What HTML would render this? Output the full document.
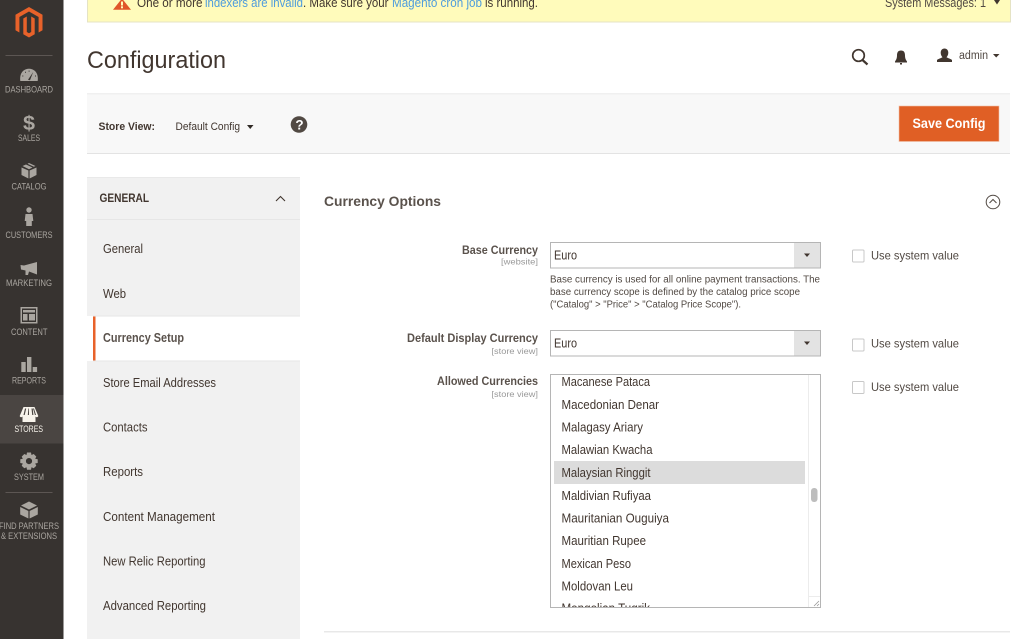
<!DOCTYPE html>
<html lang="en"><head><meta charset="utf-8"><title>Configuration</title>
<style>
html,body{margin:0;padding:0;background:#fff;width:1024px;height:639px;overflow:hidden}
svg{display:block;font-family:"Liberation Sans",sans-serif}
svg.page{filter:blur(.3px)}
.nav text{font-size:8.800px;fill:#aaa6a0}
.nav path,.nav rect.i,.nav circle.i{fill:#aaa6a0}
.m{font-size:12.500px;fill:#41362f}
.o{font-size:12.500px;fill:#41362f}
.l{font-size:12px;font-weight:bold;fill:#5a524c}
.s{font-size:8.500px;fill:#999}
.n{font-size:10px;fill:#514943}
.u{font-size:12px;fill:#514943}
.e{font-size:12.500px;fill:#41362f}
.b{fill:#fff;stroke:#b5b5b5;stroke-width:1}
.c{fill:#fff;stroke:#c8c8c8;stroke-width:1}
</style></head><body>
<svg class="page" width="1024" height="639" viewBox="0 0 1024 639" xmlns="http://www.w3.org/2000/svg">
<!-- sidebar -->
<rect x="0" y="0" width="63.500" height="639" fill="#373330"/>
<rect x="0" y="395" width="63.500" height="48.500" fill="#4a4542"/>
<path d="M29 7L42.500 14.800V30.200L38.600 32.500V17L29 11.500L19.400 17V32.500L15.500 30.200V14.800Z" fill="#e8622a"/>
<path d="M29 37.500L23.300 34.200V18.500L26.800 16.500V32L29 33.300L31.200 32V16.500L34.700 18.500V34.200Z" fill="#e8622a"/>
<rect x="5.500" y="55" width="47" height="1" fill="#5c5653"/>
<rect x="5.500" y="492" width="47" height="1" fill="#5c5653"/>
<g class="nav">
<path d="M20.300 81C19.300 73.500 23.300 68.800 29 68.800C34.700 68.800 38.700 73.500 37.700 81Z"/>
<path d="M28 79.800L33.200 72L30 80.300Z" style="fill:#373330"/>
<path d="M22.300 75.500h1v1h-1zM25 71.800h1v1h-1zM28.600 70.600h1v1h-1zM35 75.500h1v1h-1z" style="fill:#373330"/>
<text x="5" y="92.500" textLength="48" lengthAdjust="spacingAndGlyphs">DASHBOARD</text>
<text x="23" y="130" style="font-size:20px;font-weight:bold;fill:#aaa6a0" textLength="12" lengthAdjust="spacingAndGlyphs">$</text>
<text x="18" y="141" textLength="22" lengthAdjust="spacingAndGlyphs">SALES</text>
<path d="M21.500 167.500L28.400 170.500V178.500L21.500 175Z"/>
<path d="M29.600 170.500L36.500 167.500V175L29.600 178.500Z"/>
<path d="M22.500 166L26 164.500L32.500 167.500L29 169.300Z"/>
<path d="M27.500 163.800L29 163L35.500 166L33.800 166.800Z"/>
<text x="11.500" y="189.500" textLength="35" lengthAdjust="spacingAndGlyphs">CATALOG</text>
<circle class="i" cx="29" cy="210" r="2.700"/>
<path d="M25.500 214H32.500L33.300 221H31.800V226H26.200V221H24.700Z"/>
<text x="5.500" y="238" textLength="47" lengthAdjust="spacingAndGlyphs">CUSTOMERS</text>
<path d="M20.500 265L24 265.500L37 262V274.500L29 271.500L28 275H25.500L25.500 270.500L21 269.500Z"/>
<text x="6" y="286" textLength="46" lengthAdjust="spacingAndGlyphs">MARKETING</text>
<path fill-rule="evenodd" d="M20.500 307H37.500V323.500H20.500ZM22 308.500V322H36V308.500Z"/>
<rect class="i" x="23" y="310" width="12" height="2.500"/>
<rect class="i" x="23" y="314" width="4.500" height="6.500"/>
<rect class="i" x="29" y="314" width="6" height="6.500"/>
<text x="11" y="335" textLength="36.500" lengthAdjust="spacingAndGlyphs">CONTENT</text>
<rect class="i" x="21.300" y="362" width="4.400" height="10"/>
<rect class="i" x="27" y="357" width="4.400" height="15"/>
<rect class="i" x="32.700" y="367" width="4.400" height="5"/>
<text x="12" y="383.500" textLength="34" lengthAdjust="spacingAndGlyphs">REPORTS</text>
<path style="fill:#f7f3eb" d="M23.500 407H34.500L38.300 416C38 417.500 36 417.500 35.500 416.500V422H22.500V416.500C22 417.500 20 417.500 19.700 416Z"/>
<path style="fill:#4a4542" d="M25 408.500L23.500 415H24.700L26.200 408.500ZM28.400 408.500L27.800 415H29L29 408.500ZM31.500 408.500L32.200 415H33.400L32.700 408.500ZM34 408.500L36 415H34.900L33 408.500Z"/>
<text x="14.500" y="432" style="fill:#f7f3eb" textLength="28.500" lengthAdjust="spacingAndGlyphs">STORES</text>
<path fill-rule="evenodd" d="M27 452.500H31L31.500 455L33.700 454L36.300 456.600L35.200 458.800L37.700 459.300V463L35.200 463.500L36.300 465.700L33.700 468.300L31.500 467.200L31 469.700H27L26.500 467.200L24.300 468.300L21.700 465.700L22.800 463.500L20.300 463V459.300L22.800 458.800L21.700 456.600L24.300 454L26.500 455ZM29 458A3.100 3.100 0 1 0 29 464.200A3.100 3.100 0 1 0 29 458Z"/>
<text x="14" y="480" textLength="30" lengthAdjust="spacingAndGlyphs">SYSTEM</text>
<path d="M29 501.500L37 505.500L29 509.500L21 505.500Z"/>
<path d="M20.200 507L28.400 511V518.500L20.200 514.500Z"/>
<path d="M29.600 511L37.800 507V514.500L29.600 518.500Z"/>
<text x="-1" y="529" textLength="60" lengthAdjust="spacingAndGlyphs">FIND PARTNERS</text>
<text x="1" y="539" textLength="56" lengthAdjust="spacingAndGlyphs">&amp; EXTENSIONS</text>
</g>

<!-- notice bar -->
<rect x="87.500" y="-2" width="923" height="24" fill="#fffbbb" stroke="#e5e3c4"/>
<path d="M113 9.800L122 -1.500L131 9.800Z" fill="#e0562a"/>
<rect x="121" y="1.500" width="2" height="4" fill="#fffbbb"/>
<rect x="121" y="6.300" width="2" height="2" fill="#fffbbb"/>
<g font-size="12.500" fill="#41362f">
<text x="137" y="7" textLength="65.500" lengthAdjust="spacingAndGlyphs">One or more</text>
<text x="205" y="7" textLength="98" lengthAdjust="spacingAndGlyphs" fill="#4e9cdc">indexers are invalid</text>
<text x="303" y="7" textLength="85.500" lengthAdjust="spacingAndGlyphs">. Make sure your</text>
<text x="392" y="7" textLength="90" lengthAdjust="spacingAndGlyphs" fill="#4e9cdc">Magento cron job</text>
<text x="485" y="7" textLength="53" lengthAdjust="spacingAndGlyphs">is running.</text>
<text x="885" y="7" textLength="101" lengthAdjust="spacingAndGlyphs" fill="#514943">System Messages: 1</text>
</g>
<path d="M994 0H1000L997 4.500Z" fill="#41362f"/>

<!-- header -->
<text x="87" y="68" font-size="24" fill="#41362f" textLength="139" lengthAdjust="spacingAndGlyphs">Configuration</text>
<circle cx="858.500" cy="55.500" r="5.800" fill="none" stroke="#41362f" stroke-width="1.700"/>
<path d="M862.500 60L867.500 64.500" stroke="#41362f" stroke-width="2.200" fill="none"/>
<path d="M901 50.500C904 50.500 905 52.500 905 55.500C905 58.500 906 60 907 61.500V62.500H895V61.500C896 60 897 58.500 897 55.500C897 52.500 898 50.500 901 50.500Z" fill="#41362f"/>
<rect x="900" y="63" width="2" height="1.500" fill="#41362f"/>
<path d="M944.500 48.500C947 48.500 948.300 50.300 948.300 52.800C948.300 55 947.300 56.500 946.500 57.300C948.500 58.500 951 59 952 60V62H937V60C938 59 940.500 58.500 942.500 57.300C941.700 56.500 940.700 55 940.700 52.800C940.700 50.300 942 48.500 944.500 48.500Z" fill="#41362f"/>
<text x="959" y="59" font-size="11.500" fill="#514943" textLength="29" lengthAdjust="spacingAndGlyphs">admin</text>
<path d="M993 54H999.500L996.200 57.500Z" fill="#41362f"/>

<!-- toolbar -->
<rect x="87" y="94" width="923" height="59.500" fill="#f8f8f8"/>
<rect x="87" y="93" width="923" height="1.500" fill="#f0f0f0"/>
<rect x="87" y="153" width="923" height="1" fill="#e3e3e3"/>
<text x="98.500" y="130" font-size="11" font-weight="bold" fill="#41362f" textLength="56.500" lengthAdjust="spacingAndGlyphs">Store View:</text>
<text x="175.500" y="130" font-size="11" fill="#41362f" textLength="64.500" lengthAdjust="spacingAndGlyphs">Default Config</text>
<path d="M247 125H253.500L250.200 129Z" fill="#302a26"/>
<circle cx="299" cy="124.500" r="8.300" fill="#514943"/>
<text x="295.400" y="129.500" font-size="13.500" font-weight="bold" fill="#fff">?</text>
<rect x="899" y="106" width="100" height="35.500" fill="#e05f25" stroke="#f0c0a8" stroke-width=".6"/>
<text x="912.500" y="128" font-size="14" font-weight="bold" fill="#fff" textLength="73" lengthAdjust="spacingAndGlyphs">Save Config</text>

<!-- left menu -->
<rect x="87" y="177" width="213" height="462" fill="#f1f1f1"/>
<rect x="87" y="219" width="213" height="1" fill="#e6e6e6"/>
<rect x="87" y="177" width="213" height="1" fill="#e9e9e9"/>
<text x="99.500" y="202" font-size="12" font-weight="bold" fill="#41362f" textLength="49.500" lengthAdjust="spacingAndGlyphs">GENERAL</text>
<path d="M276 201L280.500 196.500L285 201" fill="none" stroke="#41362f" stroke-width="1.100"/>
<rect x="87" y="316" width="213" height="45" fill="#fff"/>
<rect x="93" y="316" width="2.500" height="45" fill="#e8622a"/>
<rect x="93" y="315.500" width="207" height="1" fill="#e6e6e6"/>
<rect x="93" y="360.500" width="207" height="1" fill="#e6e6e6"/>
<text class="m" x="103" y="253" textLength="40" lengthAdjust="spacingAndGlyphs">General</text>
<text class="m" x="103" y="298" textLength="23" lengthAdjust="spacingAndGlyphs">Web</text>
<text class="m" x="103" y="342" font-weight="bold" textLength="81" lengthAdjust="spacingAndGlyphs" style="fill:#5a524c">Currency Setup</text>
<text class="m" x="103" y="387" textLength="113" lengthAdjust="spacingAndGlyphs">Store Email Addresses</text>
<text class="m" x="103" y="431.500" textLength="44.500" lengthAdjust="spacingAndGlyphs">Contacts</text>
<text class="m" x="103" y="476" textLength="40" lengthAdjust="spacingAndGlyphs">Reports</text>
<text class="m" x="103" y="521" textLength="112" lengthAdjust="spacingAndGlyphs">Content Management</text>
<text class="m" x="103" y="565.500" textLength="102.500" lengthAdjust="spacingAndGlyphs">New Relic Reporting</text>
<text class="m" x="103" y="610" textLength="103" lengthAdjust="spacingAndGlyphs">Advanced Reporting</text>

<!-- section -->
<text x="324" y="206" font-size="14" font-weight="bold" fill="#5a524c" textLength="117" lengthAdjust="spacingAndGlyphs">Currency Options</text>
<circle cx="993" cy="202" r="6.800" fill="none" stroke="#514943" stroke-width="1"/>
<path d="M989.500 203L993 199.500L996.500 203" fill="none" stroke="#514943" stroke-width="1"/>

<!-- labels -->
<text class="l" x="462" y="254" textLength="76" lengthAdjust="spacingAndGlyphs">Base Currency</text>
<text class="s" x="501" y="264.500" textLength="37" lengthAdjust="spacingAndGlyphs">[website]</text>
<text class="l" x="407" y="342" textLength="131" lengthAdjust="spacingAndGlyphs">Default Display Currency</text>
<text class="s" x="491.500" y="354" textLength="46.500" lengthAdjust="spacingAndGlyphs">[store view]</text>
<text class="l" x="437" y="385" textLength="101" lengthAdjust="spacingAndGlyphs">Allowed Currencies</text>
<text class="s" x="491.500" y="397" textLength="46.500" lengthAdjust="spacingAndGlyphs">[store view]</text>

<!-- selects -->
<rect class="b" x="550.500" y="242.500" width="270" height="25.500"/>
<rect x="794" y="243" width="26" height="24.500" fill="#e3e3e3"/>
<path d="M804 253.500H810L807 257Z" fill="#41362f"/>
<text class="e" x="554" y="259.500" textLength="23" lengthAdjust="spacingAndGlyphs">Euro</text>
<rect class="b" x="550.500" y="330.500" width="270" height="25.500"/>
<rect x="794" y="331" width="26" height="24.500" fill="#e3e3e3"/>
<path d="M804 341.500H810L807 345Z" fill="#41362f"/>
<text class="e" x="554" y="347.500" textLength="23" lengthAdjust="spacingAndGlyphs">Euro</text>
<text class="n" x="550" y="282.500" textLength="270" lengthAdjust="spacingAndGlyphs">Base currency is used for all online payment transactions. The</text>
<text class="n" x="550" y="295" textLength="250" lengthAdjust="spacingAndGlyphs">base currency scope is defined by the catalog price scope</text>
<text class="n" x="550" y="307.500" textLength="191" lengthAdjust="spacingAndGlyphs">("Catalog" &gt; "Price" &gt; "Catalog Price Scope").</text>

<!-- use system value -->
<rect class="c" x="852.500" y="250" width="11.500" height="12" rx="1"/>
<text class="u" x="871" y="259.500" textLength="88" lengthAdjust="spacingAndGlyphs">Use system value</text>
<rect class="c" x="852.500" y="339" width="11.500" height="12" rx="1"/>
<text class="u" x="871" y="347.500" textLength="88" lengthAdjust="spacingAndGlyphs">Use system value</text>
<rect class="c" x="852.500" y="381.500" width="11.500" height="12" rx="1"/>
<text class="u" x="871" y="391" textLength="88" lengthAdjust="spacingAndGlyphs">Use system value</text>

<!-- multiselect -->
<svg x="551" y="375" width="269" height="232" viewBox="551 375 269 232">
<rect x="554" y="461" width="251" height="23" fill="#dcdcdc"/>
<text class="o" x="561.500" y="386" textLength="88.500" lengthAdjust="spacingAndGlyphs">Macanese Pataca</text>
<text class="o" x="561.500" y="409" textLength="97.500" lengthAdjust="spacingAndGlyphs">Macedonian Denar</text>
<text class="o" x="561.500" y="431.500" textLength="81.500" lengthAdjust="spacingAndGlyphs">Malagasy Ariary</text>
<text class="o" x="561.500" y="454" textLength="91" lengthAdjust="spacingAndGlyphs">Malawian Kwacha</text>
<text class="o" x="561.500" y="477" textLength="89" lengthAdjust="spacingAndGlyphs">Malaysian Ringgit</text>
<text class="o" x="561.500" y="500" textLength="89.500" lengthAdjust="spacingAndGlyphs">Maldivian Rufiyaa</text>
<text class="o" x="561.500" y="522.500" textLength="107.500" lengthAdjust="spacingAndGlyphs">Mauritanian Ouguiya</text>
<text class="o" x="561.500" y="545" textLength="84.500" lengthAdjust="spacingAndGlyphs">Mauritian Rupee</text>
<text class="o" x="561.500" y="568" textLength="69.500" lengthAdjust="spacingAndGlyphs">Mexican Peso</text>
<text class="o" x="561.500" y="590.500" textLength="71.500" lengthAdjust="spacingAndGlyphs">Moldovan Leu</text>
<text class="o" x="561.500" y="612.500" textLength="88.500" lengthAdjust="spacingAndGlyphs">Mongolian Tugrik</text>
<rect x="808" y="375" width="12" height="232" fill="#fff"/>
<rect x="808" y="375" width="1" height="232" fill="#ececec"/>
<rect x="811" y="488" width="6.500" height="14" rx="3" fill="#bdbdbd"/>
<rect x="808" y="596" width="12" height="1" fill="#ececec"/>
<path d="M814 606L819 601M817 606L819 604" stroke="#999" stroke-width=".8" fill="none"/>
</svg>
<rect x="550.500" y="374.500" width="270" height="233" fill="none" stroke="#b5b5b5"/>

<rect x="324" y="631" width="686" height="1.500" fill="#e8e8e8"/>
</svg>
</body></html>
